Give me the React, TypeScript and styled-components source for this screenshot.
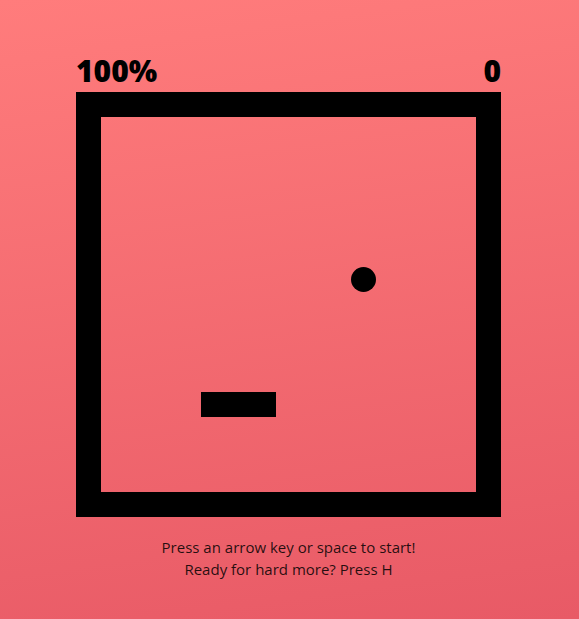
import React from "react";
import styled, { createGlobalStyle } from "styled-components";

const Global = createGlobalStyle`
  html, body { margin: 0; padding: 0; }
  body {
    font-family: "Open Sans", "Noto Sans", sans-serif;
    background: linear-gradient(172deg, #ff7c7c 0%, #e85a66 100%);
    min-height: 619px;
  }
`;

const Page = styled.div`
  min-height: 619px;
  display: flex;
  flex-direction: column;
  align-items: center;
  padding: 56px 2px 0 0;
  box-sizing: border-box;
`;

const ScoreRow = styled.div`
  width: 425px;
  display: flex;
  justify-content: space-between;
  margin-bottom: 6px;
`;

const Score = styled.div`
  font-size: 30px;
  line-height: 30px;
  font-weight: 800;
  color: #000;
`;

const Board = styled.div`
  width: 375px;
  height: 375px;
  border: 25px solid #000;
  position: relative;
`;

const Ball = styled.div<{ $x: number; $y: number }>`
  position: absolute;
  left: ${(p) => p.$x}px;
  top: ${(p) => p.$y}px;
  width: 25px;
  height: 25px;
  border-radius: 50%;
  background: #000;
`;

const Paddle = styled.div<{ $x: number; $y: number }>`
  position: absolute;
  left: ${(p) => p.$x}px;
  top: ${(p) => p.$y}px;
  width: 75px;
  height: 25px;
  background: #000;
`;

const Hint = styled.div`
  margin-top: 19px;
  text-align: center;
  font-size: 15px;
  line-height: 22px;
  color: rgba(0, 0, 0, 0.85);
`;

export default function App() {
  return (
    <>
      <Global />
      <Page>
        <ScoreRow>
          <Score>100%</Score>
          <Score>0</Score>
        </ScoreRow>
        <Board>
          <Ball $x={250} $y={150} />
          <Paddle $x={100} $y={275} />
        </Board>
        <Hint>
          Press an arrow key or space to start!
          <br />
          Ready for hard more? Press H
        </Hint>
      </Page>
    </>
  );
}
